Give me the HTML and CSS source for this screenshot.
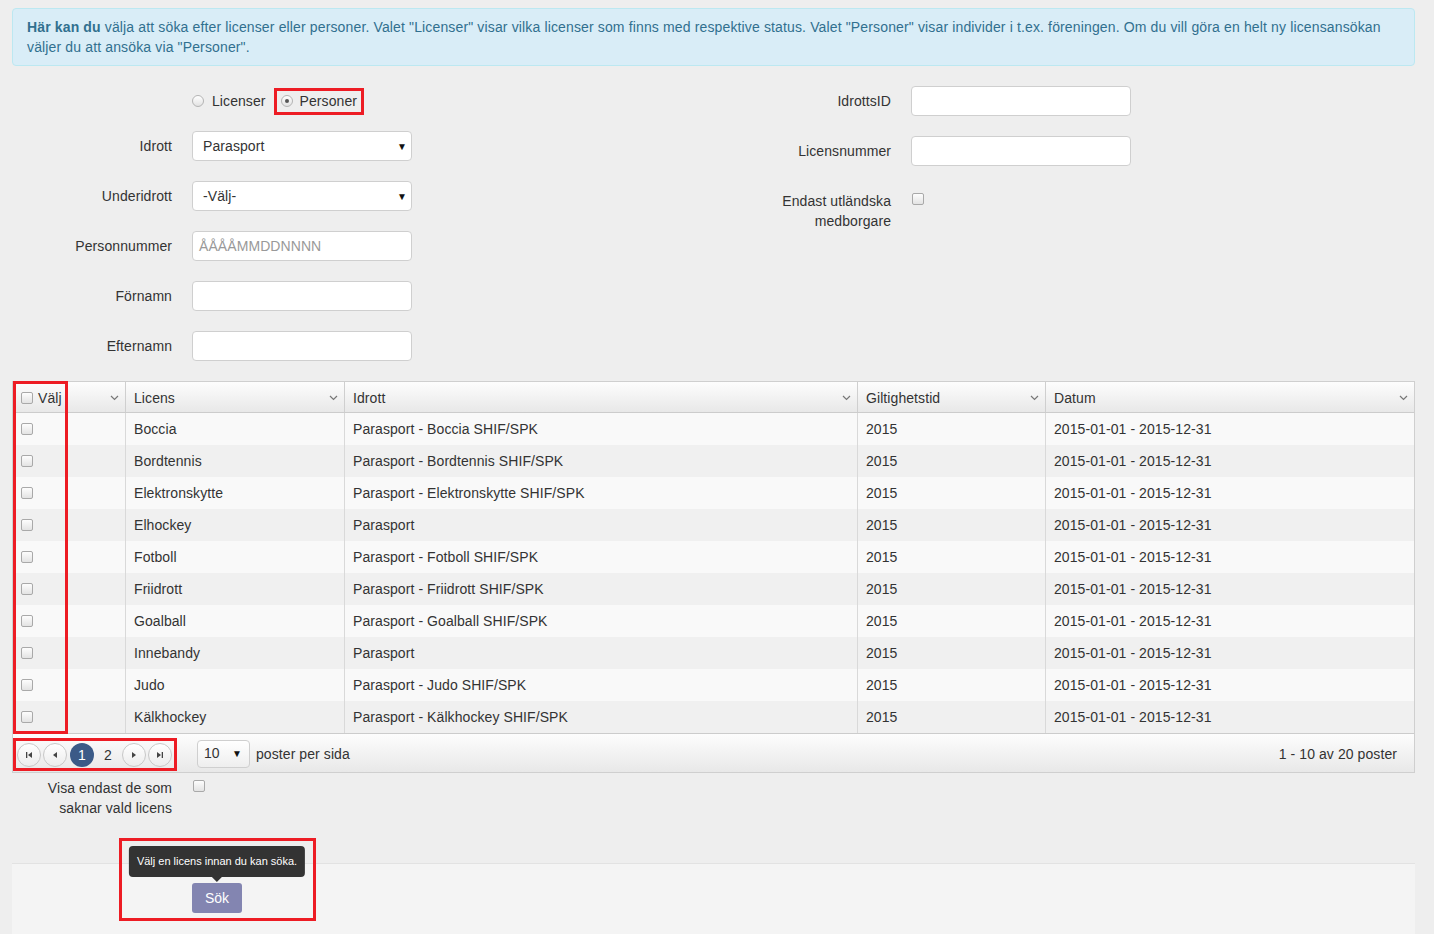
FILE: index.html
```html
<!DOCTYPE html>
<html lang="sv">
<head>
<meta charset="utf-8">
<title>Licenser</title>
<link rel="stylesheet" href="styles.css">
</head>
<body>
<div class="page">
  <div class="alert"><b>Här kan du</b> välja att söka efter licenser eller personer. Valet "Licenser" visar vilka licenser som finns med respektive status. Valet "Personer" visar individer i t.ex. föreningen. Om du vill göra en helt ny licensansökan väljer du att ansöka via "Personer".</div>

  <div class="form">
    <div class="col col-left">
      <div class="row radio-row">
        <span class="lbl"></span>
        <div class="radios">
          <label class="radio"><span class="rb"></span>Licenser</label>
          <label class="radio marked"><span class="rb on"></span>Personer</label>
        </div>
      </div>
      <div class="row"><span class="lbl">Idrott</span><div class="select"><span>Parasport</span><span class="caret">&#9660;</span></div></div>
      <div class="row"><span class="lbl">Underidrott</span><div class="select"><span>-Välj-</span><span class="caret">&#9660;</span></div></div>
      <div class="row"><span class="lbl">Personnummer</span><div class="input"><span class="ph">ÅÅÅÅMMDDNNNN</span></div></div>
      <div class="row"><span class="lbl">Förnamn</span><div class="input"></div></div>
      <div class="row"><span class="lbl">Efternamn</span><div class="input"></div></div>
    </div>
    <div class="col col-right">
      <div class="row"><span class="lbl">IdrottsID</span><div class="input"></div></div>
      <div class="row"><span class="lbl">Licensnummer</span><div class="input"></div></div>
      <div class="row row-top"><span class="lbl two">Endast utländska<br>medborgare</span><span class="cb cb-top"></span></div>
    </div>
  </div>

  <div class="grid">
    <div class="tr th">
      <div class="c"><span class="hl"><span class="cb"></span>Välj</span><svg class="chev" width="9" height="6" viewBox="0 0 9 6"><polyline points="1,1 4.5,4.5 8,1" fill="none" stroke="#777" stroke-width="1.2"/></svg></div>
      <div class="c"><span>Licens</span><svg class="chev" width="9" height="6" viewBox="0 0 9 6"><polyline points="1,1 4.5,4.5 8,1" fill="none" stroke="#777" stroke-width="1.2"/></svg></div>
      <div class="c"><span>Idrott</span><svg class="chev" width="9" height="6" viewBox="0 0 9 6"><polyline points="1,1 4.5,4.5 8,1" fill="none" stroke="#777" stroke-width="1.2"/></svg></div>
      <div class="c"><span>Giltighetstid</span><svg class="chev" width="9" height="6" viewBox="0 0 9 6"><polyline points="1,1 4.5,4.5 8,1" fill="none" stroke="#777" stroke-width="1.2"/></svg></div>
      <div class="c"><span>Datum</span><svg class="chev" width="9" height="6" viewBox="0 0 9 6"><polyline points="1,1 4.5,4.5 8,1" fill="none" stroke="#777" stroke-width="1.2"/></svg></div>
    </div>
    <div class="tr"><div class="c"><span class="cb"></span></div><div class="c">Boccia</div><div class="c">Parasport - Boccia SHIF/SPK</div><div class="c">2015</div><div class="c">2015-01-01 - 2015-12-31</div></div>
    <div class="tr"><div class="c"><span class="cb"></span></div><div class="c">Bordtennis</div><div class="c">Parasport - Bordtennis SHIF/SPK</div><div class="c">2015</div><div class="c">2015-01-01 - 2015-12-31</div></div>
    <div class="tr"><div class="c"><span class="cb"></span></div><div class="c">Elektronskytte</div><div class="c">Parasport - Elektronskytte SHIF/SPK</div><div class="c">2015</div><div class="c">2015-01-01 - 2015-12-31</div></div>
    <div class="tr"><div class="c"><span class="cb"></span></div><div class="c">Elhockey</div><div class="c">Parasport</div><div class="c">2015</div><div class="c">2015-01-01 - 2015-12-31</div></div>
    <div class="tr"><div class="c"><span class="cb"></span></div><div class="c">Fotboll</div><div class="c">Parasport - Fotboll SHIF/SPK</div><div class="c">2015</div><div class="c">2015-01-01 - 2015-12-31</div></div>
    <div class="tr"><div class="c"><span class="cb"></span></div><div class="c">Friidrott</div><div class="c">Parasport - Friidrott SHIF/SPK</div><div class="c">2015</div><div class="c">2015-01-01 - 2015-12-31</div></div>
    <div class="tr"><div class="c"><span class="cb"></span></div><div class="c">Goalball</div><div class="c">Parasport - Goalball SHIF/SPK</div><div class="c">2015</div><div class="c">2015-01-01 - 2015-12-31</div></div>
    <div class="tr"><div class="c"><span class="cb"></span></div><div class="c">Innebandy</div><div class="c">Parasport</div><div class="c">2015</div><div class="c">2015-01-01 - 2015-12-31</div></div>
    <div class="tr"><div class="c"><span class="cb"></span></div><div class="c">Judo</div><div class="c">Parasport - Judo SHIF/SPK</div><div class="c">2015</div><div class="c">2015-01-01 - 2015-12-31</div></div>
    <div class="tr"><div class="c"><span class="cb"></span></div><div class="c">Kälkhockey</div><div class="c">Parasport - Kälkhockey SHIF/SPK</div><div class="c">2015</div><div class="c">2015-01-01 - 2015-12-31</div></div>

    <div class="pager">
      <div class="pages">
        <span class="pb"><svg width="8" height="8" viewBox="0 0 8 8"><rect x="1" y="1" width="1.3" height="6" fill="#444"/><polygon points="7,1 7,7 3,4" fill="#444"/></svg></span>
        <span class="pb"><svg width="8" height="8" viewBox="0 0 8 8"><polygon points="6,1 6,7 2,4" fill="#444"/></svg></span>
        <span class="pn active">1</span>
        <span class="pn">2</span>
        <span class="pb"><svg width="8" height="8" viewBox="0 0 8 8"><polygon points="2,1 2,7 6,4" fill="#444"/></svg></span>
        <span class="pb"><svg width="8" height="8" viewBox="0 0 8 8"><polygon points="1,1 1,7 5,4" fill="#444"/><rect x="5.7" y="1" width="1.3" height="6" fill="#444"/></svg></span>
      </div>
      <div class="psize"><span>10</span><span class="caret">&#9660;</span></div>
      <span class="ptext">poster per sida</span>
      <span class="pinfo">1 - 10 av 20 poster</span>
    </div>
    <div class="mark mark-col"></div>
  </div>

  <div class="row row-top visa"><span class="lbl two">Visa endast de som<br>saknar vald licens</span><span class="cb cb-top"></span></div>

  <div class="footer">
    <span class="lbl"></span>
    <div class="btn-wrap">
      <div class="tip">Välj en licens innan du kan söka.</div>
      <button class="btn" type="button">Sök</button>
    </div>
    <div class="mark mark-btn"></div>
  </div>
</div>
</body>
</html>
```
FILE: styles.css
```css
* { box-sizing: border-box; }
html, body { margin: 0; padding: 0; }
body {
  background: #eeeeee;
  font-family: "Liberation Sans", Arial, sans-serif;
  font-size: 14px;
  color: #333;
  height: 934px;
  overflow: hidden;
  letter-spacing: 0.08px;
}
.page { padding: 8px 19px 0 12px; }

.alert {
  background: #d9edf7;
  border: 1px solid #bce8f1;
  border-radius: 4px;
  color: #31708f;
  line-height: 20px;
  padding: 8px 14px;
  letter-spacing: 0.14px;
}

.form { display: flex; margin-top: 20px; }
.col-left { width: 701px; }
.col-right { flex: 1; }
.col-right .lbl { width: 178px; }

.row { display: flex; align-items: center; height: 30px; margin-bottom: 20px; }
.radio-row { margin-bottom: 15px; }
.lbl { width: 160px; flex: none; text-align: right; margin-right: 20px; line-height: 20px; }
.row-top { align-items: flex-start; height: auto; padding-top: 5px; }
.lbl.two { line-height: 20px; }
.cb-top { margin-top: 2px; margin-left: 1px; }

.radios { display: flex; align-items: center; }
.radio { display: flex; align-items: center; }
.radio .rb { margin-right: 8px; }
.radio.marked {
  border: 3px solid #ed1c24;
  margin-left: 8px;
  padding: 0 4px 0 4px;
  height: 27px;
}
.radio.marked .rb { margin-right: 7px; }
.rb {
  width: 12px; height: 12px; border-radius: 50%;
  border: 1px solid #b4b4b4;
  background: linear-gradient(#ffffff, #e2e2e2);
  display: inline-flex; align-items: center; justify-content: center;
}
.rb.on::after {
  content: ""; width: 4px; height: 4px; border-radius: 50%; background: #555;
}

.select, .input {
  width: 220px; height: 30px;
  background: #fff;
  border: 1px solid #cfcfcf;
  border-radius: 4px;
  display: flex; align-items: center;
}
.select { padding: 0 4px 0 10px; justify-content: space-between; }
.input { padding: 0 6px; }
.ph { color: #999; }
.caret { font-size: 10px; color: #111; }

.cb {
  display: inline-block; width: 12px; height: 12px;
  border: 1px solid #a9a9a9; border-radius: 2px;
  background: linear-gradient(#fdfdfd, #e3e3e3);
  flex: none;
}

.grid {
  position: relative;
  border: 1px solid #cfcfcf;
  margin-top: 0;
}
.tr {
  display: grid;
  grid-template-columns: 112px 219px 513px 188px 1fr;
  height: 32px;
}
.tr .c {
  display: flex; align-items: center;
  padding: 0 8px;
  border-left: 1px solid #d9d9d9;
  white-space: nowrap;
}
.tr .c:first-child { border-left: none; }
.tr:nth-child(even) { background: #f9f9f9; }
.tr:nth-child(odd) { background: #f0f0f0; }
.tr.th {
  height: 31px;
  background: linear-gradient(#fdfdfd, #e8e8e8);
  border-bottom: 1px solid #cccccc;
}
.tr.th .c { justify-content: space-between; padding-right: 6px; border-left-color: #cfcfcf; padding-top: 2px; }
.hl { display: flex; align-items: center; }
.hl .cb { margin-right: 5px; }

.pager {
  display: flex; align-items: center;
  height: 39px;
  border-top: 1px solid #cccccc;
  background: linear-gradient(#fdfdfd, #e8e8e8);
  padding-top: 2px;
}
.pages {
  display: flex; align-items: center;
  border: 3px solid #ed1c24;
  height: 33px;
  padding: 0 2px 0 1px;
  margin-top: 1px;
}
.pb, .pn {
  width: 24px; height: 24px; border-radius: 50%;
  display: inline-flex; align-items: center; justify-content: center;
  margin-left: 2px;
  flex: none;
}
.pages > :first-child { margin-left: 0; }
.pb { border: 1px solid #c8c8c8; background: linear-gradient(#ffffff, #ececec); }
.pn.active { background: #3b5a87; color: #fff; margin-left: 3px; }
.psize {
  margin-left: 20px;
  width: 53px; height: 28px;
  border: 1px solid #cfcfcf; border-radius: 4px;
  background: linear-gradient(#ffffff, #eeeeee);
  display: flex; align-items: center; justify-content: space-between;
  padding: 0 7px 2px 6px;
}
.ptext { margin-left: 6px; }
.pinfo { margin-left: auto; padding-right: 17px; }

.mark { position: absolute; border: 3px solid #ed1c24; pointer-events: none; }
.mark-col { left: 0; top: -1px; width: 55px; height: 353px; }

.visa { margin-top: 0; margin-bottom: 0; }

.footer {
  position: relative;
  display: flex;
  margin-top: 45px;
  background: #f4f4f4;
  border-top: 1px solid #e2e2e2;
  padding-top: 19px;
  height: 120px;
}
.btn-wrap { position: relative; }
.tip {
  position: absolute;
  bottom: calc(100% + 6px);
  left: 50%;
  transform: translateX(-50%);
  background: #333;
  color: #fff;
  font-size: 11px;
  line-height: 15px;
  padding: 8px 8px;
  border-radius: 4px;
  white-space: nowrap;
  letter-spacing: 0;
}
.tip::after {
  content: "";
  position: absolute;
  top: 100%; left: 50%;
  margin-left: -5px;
  border: 5px solid transparent;
  border-top-color: #333;
  border-bottom: 0;
}
.btn {
  width: 50px; height: 30px;
  background: #8385b1;
  color: #fff;
  border: none;
  border-radius: 3px;
  font-family: "Liberation Sans", Arial, sans-serif;
  font-size: 14px;
  padding: 0;
}
.mark-btn { left: 107px; top: -26px; width: 197px; height: 83px; }
```
